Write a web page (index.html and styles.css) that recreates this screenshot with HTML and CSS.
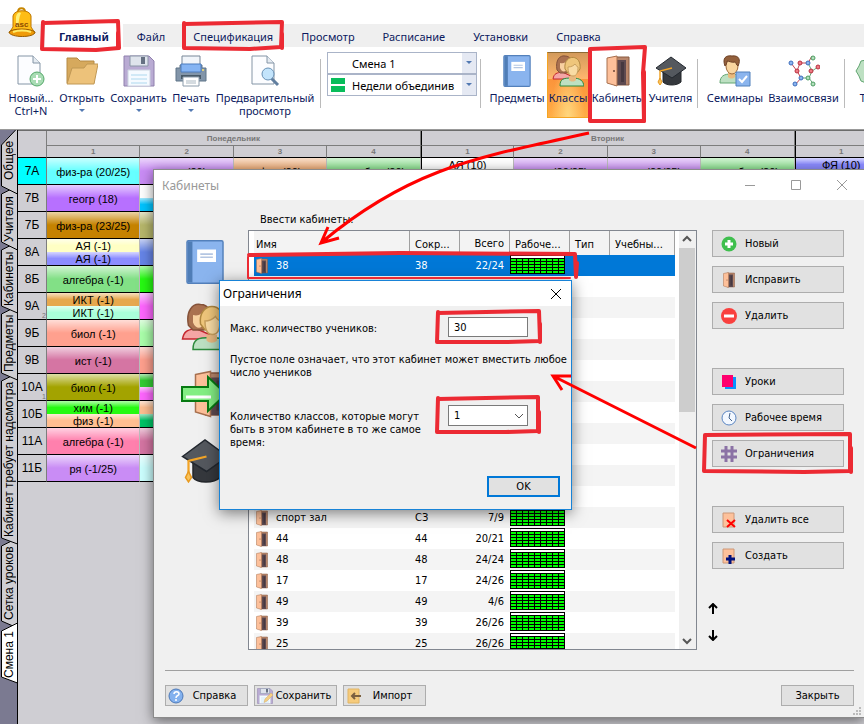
FILE: index.html
```html
<!DOCTYPE html>
<html lang="ru">
<head>
<meta charset="utf-8">
<title>Кабинеты</title>
<link rel="stylesheet" href="styles.css">
</head>
<body>
<svg class="defs" width="0" height="0" aria-hidden="true">
  <defs>
    <symbol id="hours" viewBox="0 0 55 19"><g shape-rendering="crispEdges"><path d="M0 0h55v19H0z" fill="#000"/><path d="M1 1h53v2H1z" fill="#fff"/><path d="M1 4h53v2H1zM1 7h53v2H1zM1 10h53v2H1zM1 13h53v2H1zM1 16h53v2H1z" fill="#0f0"/><path d="M6 3h1v15H6zM12 3h1v15h-1zM18 3h1v15h-1zM24 3h1v15h-1zM30 3h1v15h-1zM36 3h1v15h-1zM42 3h1v15h-1zM48 3h1v15h-1z" fill="#000"/></g></symbol>
    <symbol id="door" viewBox="0 0 24 32"><path d="M8 2h15v28H8z" fill="#b8866b" stroke="#8a5a40"/><path d="M11 5h9v25h-9z" fill="#5e4a50"/><path d="M15 7h3v20h-3z" fill="#463840"/><path d="M1 3 11 1v30L1 28z" fill="#fdc09a" stroke="#a8704f"/><circle cx="8" cy="16" r="1" fill="#6d4636"/></symbol>
    <symbol id="book" viewBox="0 0 24 28"><rect x=".5" y=".5" width="23" height="27" rx="1" fill="#8ab4ee" stroke="#5380bb"/><path d="M1 1h3v26H1z" fill="#4f7db6"/><path d="M7 6h12v8H7z" fill="#fff"/><path d="M9 9h8M9 11h8" stroke="#b4c6e2"/></symbol>
    <symbol id="people" viewBox="0 0 32 32"><path d="M1 24c1-6 4-6 9-7l9 4v3z" fill="#f5a5a5" stroke="#c4262e"/><path d="M5 15C3 5 8 0 13 1c6 0 7 5 7 14l-5 3H8z" fill="#aa7150" stroke="#85523a"/><path d="M8 8c4 1 6-1 7-3v9c-1 3-5 4-7-1z" fill="#f8d0a0"/><path d="M8 31c0-7 3-8 12-8s11 3 12 8z" fill="#bde0c2" stroke="#2d8a3c"/><path d="M17 21h7v4c-2 2-5 2-7 0z" fill="#e8b980"/><path d="M13 14c-2-15 17-16 15 0l-3 4h-9z" fill="#efc67b" stroke="#b08840"/><path d="M16 12c4 0 6-2 7-3 1 2 2 2 3 3 0 5-1 9-5 9s-5-4-5-9z" fill="#f9dba4" stroke="#c9a05e"/></symbol>
    <symbol id="cap" viewBox="0 0 32 30"><path d="M8 13v13c3 4 14 4 18 0V13z" fill="#35383d" stroke="#23262a"/><path d="M1 12 16 1l15 11-14 10z" fill="#54585e" stroke="#23282f"/><path d="m17 12-12 3v11" fill="none" stroke="#f2a427" stroke-width="1.500"/><path d="m5 22-2 4 2 3 2-3z" fill="#f9c35c" stroke="#e89a20"/></symbol>
    <symbol id="floppy" viewBox="0 0 32 32"><path d="M1 1h25l5 5v25H1z" fill="#b9abd3" stroke="#8f80ad"/><path d="M7 1h18v10H7z" fill="#dfe4ec" stroke="#8b96a8"/><path d="M18 2h4v7h-4z" fill="#667182"/><path d="M5 15h22v16H5z" fill="#f5faff" stroke="#ccd3e0"/><path d="M8 20h16M8 24h16M8 28h16" stroke="#add8ee"/></symbol>
    <symbol id="page" viewBox="0 0 28 32"><path d="M1 1h15l7 7v21H1z" fill="#fcfdff" stroke="#8495a6"/><path d="M16 1v7h7" fill="#e5ebf1" stroke="#8495a6"/></symbol>
  </defs>
</svg>
<div class="app">
  <header class="ribbon">
    <nav class="menu" aria-label="Меню">
      <svg class="bell" viewBox="0 0 28 31" aria-hidden="true"><path d="M10 5c0-5 7-5 7 0" fill="none" stroke="#c78600" stroke-width="2"/><path d="M5 20V9c1-7 17-7 18 0v11l4 6H1z" fill="#ffbd16" stroke="#bd7600"/><path d="M8 19V10c1-5 4-5 5-4-2 4-2 8-3 14z" fill="#fff07a"/><path d="M1 25c4-4 21-4 26 0 0 6-25 6-26 0z" fill="#ef9b09" stroke="#985c00"/><path d="M5 25c5-2 13-2 18 0" stroke="#ffec69" stroke-width="2" fill="none"/><text x="7" y="20" class="bell-text">asc</text></svg>
      <a href="#" class="active">Главный</a><a href="#">Файл</a><a href="#">Спецификация</a><a href="#">Просмотр</a><a href="#">Расписание</a><a href="#">Установки</a><a href="#">Справка</a>
    </nav>
    <div class="tools">
      <button class="tool w-new"><svg viewBox="0 0 28 32"><use href="#page"/><circle cx="20" cy="24" r="7" fill="#a9dcb4" stroke="#55a96a"/><path d="M20 20v8M16 24h8" stroke="#fff" stroke-width="2"/></svg>Новый...<br>Ctrl+N</button>
      <button class="tool w-open"><svg viewBox="0 0 32 32"><path d="M1 28V3h10l3 3h14v22z" fill="#d6a95d" stroke="#b58a45"/><path d="m1 29 5-16h12l3-4h11l-4 20z" fill="#edc27a" stroke="#c09855"/></svg>Открыть<i></i></button>
      <button class="tool w-save"><svg viewBox="0 0 32 32"><use href="#floppy"/></svg>Сохранить<i></i></button>
      <button class="tool w-print"><svg viewBox="0 0 32 32"><path d="M7 1h18v10H7z" fill="#f1f5fa" stroke="#788797"/><path d="M1 13h4v-3h22v3h4v13H1z" fill="#8295a9" stroke="#5f7488"/><path d="M6 9h20v8H6z" fill="#85b4f3" stroke="#4c7dbf"/><path d="M6 20h20v4H6z" fill="#485967"/><path d="M8 22h16v9H8z" fill="#fff" stroke="#8c9cab"/><path d="M11 26h10M11 28h10" stroke="#aab7c1"/><circle cx="28" cy="15" r="1" fill="#ffe56b"/></svg>Печать<i></i></button>
      <button class="tool w-preview"><svg viewBox="0 0 28 32"><use href="#page"/><path d="m20 23 7 7" stroke="#627f9f" stroke-width="3"/><circle cx="17" cy="19" r="6" fill="#c3e4fb" stroke="#6991b5"/></svg>Предварительный<br>просмотр</button>
      <hr>
      <div class="combos">
        <label class="combo"><select aria-label="Смена"><option>Смена 1</option></select></label>
        <label class="combo"><span class="weeks"></span><select aria-label="Недели"><option>Недели объединив</option></select></label>
      </div>
      <hr>
      <button class="tool w-subject"><svg viewBox="0 0 32 32"><use href="#book"/></svg>Предметы</button>
      <button class="tool w-class selected"><svg viewBox="0 0 32 32"><use href="#people"/></svg>Классы</button>
      <button class="tool w-room"><svg viewBox="0 0 24 32"><use href="#door"/></svg>Кабинеты</button>
      <button class="tool w-teacher"><svg viewBox="0 0 32 32"><use href="#cap"/></svg>Учителя</button>
      <hr>
      <button class="tool w-seminar"><svg viewBox="0 0 32 32"><path d="M1 28c0-7 4-9 11-9s12 3 12 9z" fill="#bde0c2" stroke="#63a672"/><path d="M9 17h7v5c-2 2-5 2-7 0z" fill="#e9ba7d"/><ellipse cx="13" cy="11" rx="6" ry="8" fill="#f9d6a0" stroke="#9d6a3b"/><path d="M6 11C3 3 7 0 13 1c7-1 9 4 6 10-2-1-2-4-3-4-3 1-6-1-8-1 0 2-1 4-2 5z" fill="#93603c" stroke="#6e4227"/><path d="M17 17h14v14H17z" fill="#8bb5ee" stroke="#5080bb"/><path d="m20 24 3 3 5-6" stroke="#fff" stroke-width="2" fill="none"/></svg>Семинары</button>
      <button class="tool w-links"><svg viewBox="0 0 32 32"><path d="m3 8 6 8 4 7-6 7M9 16l3-8h8l4-7" stroke="#c24754" fill="none"/><path d="m13 23 8 0 5 7M21 23l3-7-4-8M24 16l6-4" stroke="#66a978" fill="none"/><g fill="#8ab4f0" stroke="#3e6dbb"><circle cx="3" cy="8" r="2"/><circle cx="20" cy="8" r="2"/><circle cx="13" cy="23" r="2"/><circle cx="7" cy="29" r="2"/></g><g fill="#ef7984" stroke="#b7303f"><circle cx="12" cy="8" r="2"/><circle cx="9" cy="16" r="2"/><circle cx="23" cy="16" r="2"/><circle cx="30" cy="12" r="2"/></g><g fill="#b3dfbd" stroke="#4c9c61"><circle cx="25" cy="3" r="2"/><circle cx="20" cy="23" r="2"/><circle cx="25" cy="29" r="2"/></g></svg>Взаимосвязи</button>
      <hr>
      <button class="tool w-test"><svg viewBox="0 0 32 32"><path d="m16 2 4 2 5 1 2 5 3 5-2 5-2 5-5 2-5 3-5-2-5-2-2-5-3-5 3-5 2-5 5-1z" fill="#bde0c2" stroke="#63a672"/></svg>Тест</button>
    </div>
  </header>

  <main class="workspace">
    <nav class="views" aria-label="Виды">
      <svg viewBox="0 0 18 594" aria-hidden="true"><g fill="#cfced3" stroke="#000"><path d="M17.500 494V412L1.500 420v67z"/><path d="M17.500 498V408L1.500 416v75z"/><path d="M17.500 414V243L1.500 251v157z"/><path d="M17.500 250V176L1.500 184v59z"/><path d="M17.500 183V112L1.500 120v56z"/><path d="M17.500 120V56L1.500 64v48z"/><path d="M17.500 64V-2L1.500 15v41z"/><path d="M17.500 553V493L1.500 501v46z" fill="#fff"/><path d="M17.500 0V594"/></g></svg>
      <button class="v1">Общее</button><button class="v2">Учителя</button><button class="v3">Кабинеты</button><button class="v4">Предметы</button><button class="v5">Кабинет требует надсмотра</button><button class="v6">Сетка уроков</button><button class="v7">Смена 1</button>
    </nav>
    <div class="grid-area">
      <table class="timetable">
        <colgroup><col class="klass"><col span="9"></colgroup>
        <thead>
          <tr class="days"><th rowspan="2"></th><th colspan="4">Понедельник</th><th colspan="4" class="day">Вторник</th><th class="day"></th></tr>
          <tr class="nums"><th>1</th><th>2</th><th>3</th><th>4</th><th class="day">1</th><th>2</th><th>3</th><th>4</th><th class="day">1</th></tr>
        </thead>
        <tbody>
          <tr><th class="cyan">7А</th><td><p class="c-aqua">физ-ра (20/25)</p></td><td><p class="c-violet">ист (20)</p></td><td><p class="c-salmon">физ (20)</p></td><td><p class="c-green">алгебра (20)</p></td><td class="day two"><p class="c-white">АЯ (10)</p><p class="c-white"></p></td><td><p class="c-violet">ист (20/25)</p></td><td><p class="c-violet">ист (20/25)</p></td><td><p class="c-green">алгебра (20)</p></td><td class="day two"><p class="c-blue">ФЯ (10)</p><p class="c-blue"></p></td></tr>
          <tr><th>7В</th><td><p class="c-purple">геогр (18)</p></td><td class="two"><p class="c-white"></p><p class="c-sky"></p></td></tr>
          <tr><th>7Б</th><td><p class="c-ochre">физ-ра (23/25)</p></td><td><p class="c-khaki"></p></td></tr>
          <tr><th>8А</th><td class="two"><p class="c-cream">АЯ (-1)</p><p class="c-blue">АЯ (-1)</p></td><td><p class="c-royal"></p></td></tr>
          <tr><th>8Б</th><td><p class="c-green">алгебра (-1)</p></td><td><p class="c-lime"></p></td></tr>
          <tr><th>9А<sub>2</sub></th><td class="two"><p class="c-orange">ИКТ (-1)</p><p class="c-mint">ИКТ (-1)</p></td><td><p class="c-pink"></p></td></tr>
          <tr><th>9Б</th><td><p class="c-coral">биол (-1)</p></td><td><p class="c-pale"></p></td></tr>
          <tr><th>9В</th><td><p class="c-mauve">ист (-1)</p></td><td><p class="c-coral"></p></td></tr>
          <tr><th>10А<sub>1</sub></th><td><p class="c-olive">биол (-1)</p></td><td class="two"><p class="c-leaf"></p><p class="c-pink"></p></td></tr>
          <tr><th>10Б</th><td class="two"><p class="c-lime">хим (-1)</p><p class="c-peach">физ (-1)</p></td><td class="two"><p class="c-peach"></p><p class="c-jade"></p></td></tr>
          <tr><th>11А</th><td><p class="c-rose">алгебра (-1)</p></td><td><p class="c-mauve"></p></td></tr>
          <tr><th>11Б</th><td><p class="c-violet">ря (-1/25)</p></td><td><p class="c-ice"></p></td></tr>
        </tbody>
      </table>
    </div>
  </main>

  <section class="window rooms" role="dialog" aria-label="Кабинеты">
    <header class="caption"><h1>Кабинеты</h1>
      <button aria-label="Свернуть"><svg viewBox="0 0 12 12"><path d="M1 6.500h10"/></svg></button>
      <button aria-label="Развернуть"><svg viewBox="0 0 12 12"><path d="M1.500 1.500h9v9h-9z"/></svg></button>
      <button aria-label="Закрыть окно"><svg viewBox="0 0 12 12"><path d="m1 1 10 10M11 1 1 11"/></svg></button>
    </header>
    <div class="content">
      <div class="pictures" aria-hidden="true">
        <svg viewBox="0 0 24 28"><use href="#book"/></svg>
        <svg viewBox="0 0 32 32"><use href="#people"/></svg>
        <svg viewBox="0 0 48 48"><svg x="7" width="36" height="48" viewBox="0 0 24 32"><use href="#door"/></svg><path d="M1 17h26V7l18 17-18 17V31H1z" fill="#83ee83" stroke="#077a12" stroke-width="2"/><path d="M5 27h25" stroke="#fff" stroke-width="3"/></svg>
        <svg viewBox="0 0 32 30"><use href="#cap"/></svg>
      </div>
      <div class="center">
        <h2>Ввести кабинеты:</h2>
        <div class="list">
          <div class="list-view">
            <table>
              <colgroup><col class="n1"><col class="n2"><col class="n2"><col class="n4"><col class="n5"><col></colgroup>
              <thead><tr><th>Имя</th><th>Сокр...</th><th class="num">Всего</th><th>Рабоче...</th><th>Тип</th><th>Учебны...</th></tr></thead>
              <tbody>
                <tr class="current"><td><svg class="ico" viewBox="0 0 24 32"><use href="#door"/></svg>38</td><td>38</td><td class="num">22/24</td><td class="hrs"><svg viewBox="0 0 55 19"><use href="#hours"/></svg></td><td></td><td></td></tr>
                <tr><td colspan="6"></td></tr><tr><td colspan="6"></td></tr><tr><td colspan="6"></td></tr><tr><td colspan="6"></td></tr><tr><td colspan="6"></td></tr><tr><td colspan="6"></td></tr><tr><td colspan="6"></td></tr><tr><td colspan="6"></td></tr><tr><td colspan="6"></td></tr><tr><td colspan="6"></td></tr><tr><td colspan="6"></td></tr>
                <tr><td><svg class="ico" viewBox="0 0 24 32"><use href="#door"/></svg>спорт зал</td><td>СЗ</td><td class="num">7/9</td><td class="hrs"><svg viewBox="0 0 55 19"><use href="#hours"/></svg></td><td></td><td></td></tr>
                <tr><td><svg class="ico" viewBox="0 0 24 32"><use href="#door"/></svg>44</td><td>44</td><td class="num">20/21</td><td class="hrs"><svg viewBox="0 0 55 19"><use href="#hours"/></svg></td><td></td><td></td></tr>
                <tr><td><svg class="ico" viewBox="0 0 24 32"><use href="#door"/></svg>48</td><td>48</td><td class="num">24/24</td><td class="hrs"><svg viewBox="0 0 55 19"><use href="#hours"/></svg></td><td></td><td></td></tr>
                <tr><td><svg class="ico" viewBox="0 0 24 32"><use href="#door"/></svg>17</td><td>17</td><td class="num">24/26</td><td class="hrs"><svg viewBox="0 0 55 19"><use href="#hours"/></svg></td><td></td><td></td></tr>
                <tr><td><svg class="ico" viewBox="0 0 24 32"><use href="#door"/></svg>49</td><td>49</td><td class="num">4/6</td><td class="hrs"><svg viewBox="0 0 55 19"><use href="#hours"/></svg></td><td></td><td></td></tr>
                <tr><td><svg class="ico" viewBox="0 0 24 32"><use href="#door"/></svg>39</td><td>39</td><td class="num">26/26</td><td class="hrs"><svg viewBox="0 0 55 19"><use href="#hours"/></svg></td><td></td><td></td></tr>
                <tr><td><svg class="ico" viewBox="0 0 24 32"><use href="#door"/></svg>25</td><td>25</td><td class="num">26/26</td><td class="hrs"><svg viewBox="0 0 55 19"><use href="#hours"/></svg></td><td></td><td></td></tr>
              </tbody>
            </table>
          </div>
          <div class="scroll"><svg viewBox="0 0 16 17"><path d="m4 10 4-4 4 4"/></svg><span></span><svg viewBox="0 0 16 17"><path d="m4 7 4 4 4-4"/></svg></div>
        </div>
      </div>
      <div class="actions">
        <div class="group">
          <button><svg viewBox="0 0 16 16"><circle cx="8" cy="8" r="7.500" fill="#3fbf4e"/><path d="M8 4v8M4 8h8" stroke="#fff" stroke-width="3"/></svg>Новый</button>
          <button><svg viewBox="0 0 24 32"><use href="#door"/></svg>Исправить</button>
          <button><svg viewBox="0 0 16 16"><circle cx="8" cy="8" r="8" fill="#f9403e"/><path d="M3 8h10" stroke="#fff" stroke-width="3"/></svg>Удалить</button>
        </div>
        <div class="group">
          <button><svg viewBox="0 0 16 16"><path d="M4 3h11v12H4z" fill="#0b92ff"/><path d="M1 1h11v12H1z" fill="#ff006e"/></svg>Уроки</button>
          <button><svg viewBox="0 0 16 16"><circle cx="8" cy="8" r="7" fill="#f3f8ff" stroke="#5b86c3"/><path d="M9 3 8 8l3 3" stroke="#44638c" fill="none"/></svg>Рабочее время</button>
          <button><svg viewBox="0 0 16 16"><path d="M5 0v16M11 0v16M0 5h16M0 11h16" stroke="#8b72a5" stroke-width="3"/></svg>Ограничения</button>
        </div>
        <div class="group">
          <button><svg viewBox="0 0 16 16"><path d="M2 1h11v14H2z" fill="#fdc19b" stroke="#cc9878"/><path d="m6 8 8 7M14 8l-8 7" stroke="#f00" stroke-width="2"/></svg>Удалить все</button>
          <button><svg viewBox="0 0 16 16"><path d="M2 1h11v14H2z" fill="#fdc19b" stroke="#cc9878"/><path d="M9 7v9M5 11h9" stroke="#00117c" stroke-width="3"/></svg>Создать</button>
        </div>
        <div class="order"><button aria-label="Вверх"><svg viewBox="0 0 10 12"><path d="M5 11V2M1 5l4-4 4 4"/></svg></button><button aria-label="Вниз"><svg viewBox="0 0 10 12"><path d="M5 1v9M1 7l4 4 4-4"/></svg></button></div>
      </div>
    </div>
    <footer class="bottom">
      <button class="mid"><svg viewBox="0 0 16 16"><circle cx="8" cy="8" r="7" fill="#83b1ee" stroke="#4d79b8"/><path d="M6 6c0-3 5-3 5 0 0 2-3 1-3 4M8 11v2" stroke="#fff" fill="none" stroke-width="1.500"/></svg><span>Справка</span></button>
      <button class="mid"><svg viewBox="0 0 32 32"><use href="#floppy"/><path d="m14 29 2-7 12-12 4 4-12 12z" fill="#f6cf83" stroke="#d3aa68"/></svg><span>Сохранить</span></button>
      <button class="mid"><svg viewBox="0 0 16 16"><path d="M2 1h11v14H2z" fill="#f6cb7c" stroke="#e1b565"/><path d="M15 8H6M9 5 6 8l3 3" stroke="#7b6040" stroke-width="2" fill="none"/></svg><span>Импорт</span></button>
      <button class="close">Закрыть</button>
      <svg class="grip" viewBox="0 0 9 9" aria-hidden="true"><path d="M0 7h2v2H0zM3 7h2v2H3zM6 7h2v2H6zM3 4h2v2H3zM6 4h2v2H6zM6 1h2v2H6z" fill="#bbb"/></svg>
    </footer>
  </section>

  <section class="window limits" role="dialog" aria-label="Ограничения">
    <header class="caption"><h1>Ограничения</h1><button aria-label="Закрыть окно"><svg viewBox="0 0 12 12"><path d="m1 1 10 10M11 1 1 11"/></svg></button></header>
    <form>
      <div class="field"><label for="max">Макс. количество учеников:</label><input id="max" type="text" value="30"></div>
      <p>Пустое поле означает, что этот кабинет может вместить любое число учеников</p>
      <div class="field"><label for="count">Количество классов, которые могут быть в этом кабинете в то же самое время:</label><span class="pick"><select id="count"><option>1</option></select><svg viewBox="0 0 10 6" aria-hidden="true"><path d="m1 1 4 4 4-4"/></svg></span></div>
      <button class="ok" type="button">OK</button>
    </form>
  </section>

  <svg class="marks" viewBox="0 0 864 724" aria-hidden="true">
    <g class="boxes">
      <path d="M43 23 118 21 119 48 96 50 42 49 43 22"/><path d="M118 33v15"/>
      <path d="M184 24 282 22 281 47 250 49 184 48 184 23"/><path d="M282 34v14"/>
      <path d="M590 49 645 47 643 73 644 121 590 121 590 49"/><path d="M644 72v49"/>
      <path d="M249 255 400 253 575 254 576 277 577 263"/><path d="M248 257v21h322" class="thin"/>
      <path d="M438 313 539 311 540 341 508 342 437 342 438 312"/><path d="M540 324v18"/>
      <path d="M438 399 538 397 538 431 506 432 437 432 438 398"/><path d="M539 412v20"/>
      <path d="M705 435 850 434 850 471 804 472 704 471 705 435"/><path d="M851 448v24"/>
    </g>
    <g class="arrows"><path d="M589 133C480 157 412 167 322 242M328 227 321 243 339 238"/><path d="M696 448 553 376M571 376H553L562 390"/></g>
  </svg>
</div>
</body>
</html>
```
FILE: styles.css
```css
* { box-sizing: border-box; }
body { margin: 0; font-family: "DejaVu Sans Condensed", "DejaVu Sans", sans-serif; font-size: 11px; color: #000; }
button, input, select { font: inherit; color: inherit; margin: 0; }
h1, h2, p { margin: 0; font-weight: normal; }
.defs { position: absolute; }
.app { position: relative; display: flex; flex-direction: column; min-height: 100vh; overflow: hidden; background: #cfced3; }

/* Ribbon */
.ribbon { padding-top: 24px; background: #fff; border-bottom: 1px solid #999; font-family: "Noto Sans", sans-serif; font-size: 11px; color: #0c1a5e; }
.menu { position: relative; display: flex; height: 23px; padding-left: 45px; background: #efefef; }
.menu a { padding: 0 14px; line-height: 26px; color: inherit; text-decoration: none; }
.menu .active { background: #fff; font-weight: bold; }
.bell { position: absolute; left: 8px; top: -17px; width: 28px; height: 31px; }
.bell-text { font: bold 8px "Liberation Sans", sans-serif; fill: #8b4a00; }
.tools { display: flex; height: 82px; padding: 5px 0 0 6px; overflow: hidden; }
.tools hr { flex: none; width: 1px; height: 49px; margin: 7px 6px 0 3px; border: 0; background: #bbb; }
.tool { display: flex; flex: none; flex-direction: column; align-items: center; height: 66px; padding: 2px 0 0; border: 1px solid transparent; background: none; line-height: 13px; white-space: nowrap; text-align: center; }
.tool svg { display: block; flex: none; width: 32px; height: 32px; margin-bottom: 4px; }
.tool i { display: block; width: 6px; margin-top: 5px; border: 3px solid transparent; border-top-color: #5279b2; border-bottom: 0; }
.w-new { width: 50px; } .w-open { width: 52px; } .w-save { width: 61px; } .w-print { width: 44px; } .w-preview { width: 104px; }
.w-subject { width: 60px; } .w-class { width: 42px; } .w-room { width: 58px; } .w-teacher { width: 47px; }
.w-seminar { width: 62px; } .w-links { width: 75px; } .w-test { width: 40px; }
.tool.selected { border-color: #f5a522; border-top-color: #8e6a35; background: radial-gradient(ellipse at bottom, #ffd77e, transparent 60%), linear-gradient(#d39a5b, #ffb66d 40%, #fb943b 41%, #ffad45); }
.combos { flex: none; width: 150px; }
.combo { position: relative; display: flex; align-items: center; height: 22px; border: 1px solid #aab4c8; color: #000; }
.combo::before { content: ""; position: absolute; right: 0; top: 0; width: 14px; height: 20px; background: #e5e9f3; }
.combo::after { content: ""; position: absolute; right: 4px; top: 8px; border: 3px solid transparent; border-top-color: #5279b2; border-bottom: 0; }
.combo select { position: relative; flex: 1; width: 100%; padding: 0 0 0 24px; border: 0; background: none; appearance: none; }
.weeks { position: absolute; left: 3px; top: 3px; width: 14px; height: 14px; background: linear-gradient(#08bd5b 6px, #fff 6px, #fff 8px, #08bd5b 8px); }

/* Side tabs and timetable */
.workspace { display: flex; flex: 1; font-family: "Liberation Sans", Arial, sans-serif; }
.views { position: relative; flex: none; display: flex; flex-direction: column; width: 18px; background: #7b7a91; }
.views > svg { position: absolute; width: 18px; height: 594px; }
.views button { position: relative; width: 18px; padding: 0; border: 0; background: none; writing-mode: vertical-rl; transform: rotate(180deg); font-size: 12px; line-height: 18px; text-align: center; white-space: nowrap; }
.v1 { height: 61px; } .v2 { height: 56px; } .v3 { height: 63px; } .v4 { height: 67px; } .v5 { height: 164px; } .v6 { height: 84px; } .v7 { height: 60px; }
.grid-area { flex: 1; min-width: 0; overflow: hidden; border-top: 1px solid #6c6c6c; }
.timetable { width: 870px; border-collapse: separate; border-spacing: 0; table-layout: fixed; font-size: 12px; }
.timetable .klass { width: 29px; }
.timetable th, .timetable td { padding: 0; font-weight: normal; border-right: 1px solid #7d7d7d; }
.timetable .days th, .timetable .nums th { font-size: 8px; font-weight: bold; color: #777; }
.days th { height: 15px; border-bottom: 1px solid #7d7d7d; }
.nums th { height: 12px; border-bottom: 1px solid #000; }
.days th[rowspan] { border-bottom-color: #000; }
.timetable .day { border-left: 1px solid #000; }
.timetable tbody th { position: relative; height: 27px; border-bottom: 1px solid #000; }
.timetable tbody td { height: 27px; border-bottom: 1px solid #000; border-right-color: #bbb; font-size: 11px; }
.timetable tbody .cyan { background: #0ff; }
.timetable sub { position: absolute; right: 0; bottom: 0; font-size: 7px; line-height: 7px; color: #777; }
.timetable p { height: 26px; line-height: 28px; text-align: center; white-space: nowrap; overflow: hidden; background-image: linear-gradient(rgba(255,255,255,.65), rgba(255,255,255,0) 50%); }
.timetable .two p { height: 13px; line-height: 14px; }
.c-aqua { background-color: #66ffff; } .c-violet { background-color: #c98cf5; } .c-salmon { background-color: #eea66c; } .c-green { background-color: #82e086; }
.c-white { background-color: #fff; } .c-blue { background-color: #8c8cff; } .c-purple { background-color: #b770ff; } .c-sky { background-color: #00c4ff; }
.c-ochre { background-color: #c58200; } .c-khaki { background-color: #b7b76b; } .c-cream { background-color: #ffffc4; } .c-royal { background-color: #6685e8; }
.c-lime { background-color: #26fa12; } .c-orange { background-color: #e6a84e; } .c-mint { background-color: #aaffda; } .c-pink { background-color: #ff66ff; }
.c-coral { background-color: #ffa08e; } .c-pale { background-color: #aaffaa; } .c-mauve { background-color: #d575a3; } .c-olive { background-color: #a3a300; }
.c-leaf { background-color: #33cc33; } .c-peach { background-color: #ffbf91; } .c-jade { background-color: #00c466; } .c-rose { background-color: #ff80ad; } .c-ice { background-color: #ccffff; }

/* Windows */
.window { position: absolute; display: flex; flex-direction: column; background: #f0f0f0; }
.caption { display: flex; align-items: center; background: #fff; font-family: "Noto Sans", sans-serif; font-size: 12px; }
.caption h1 { flex: 1; font-size: 12px; }
.caption button { padding: 0; border: 0; background: none; }
.caption svg { display: block; width: 12px; height: 12px; fill: none; stroke: currentColor; }
.rooms { left: 153px; right: 0; top: 169px; bottom: 6px; border: 1px solid #8b8b8b; border-right: 0; box-shadow: 0 3px 12px rgba(0,0,0,.5); }
.rooms .caption { height: 30px; padding: 0 16px 0 8px; gap: 34px; color: #999; }
.content { flex: 1; display: flex; min-height: 0; padding-right: 20px; }
.pictures { flex: none; width: 94px; padding: 40px 0 0 27px; display: flex; flex-direction: column; gap: 19px; }
.pictures svg { width: 48px; height: 48px; }
.pictures > svg:first-child { height: 44px; }
.center { flex: 1; min-width: 0; display: flex; flex-direction: column; }
.center h2 { flex: none; height: 30px; padding-left: 12px; font-size: 11px; line-height: 40px; }
.list { flex: 1; min-height: 0; display: flex; border: 1px solid #828790; background: #fff; }
.list-view { flex: 1; min-height: 0; overflow: hidden; padding: 0 4px 0 5px; }
.list table { width: 100%; border-collapse: collapse; table-layout: fixed; }
.n1 { width: 156px; } .n2 { width: 50px; } .n4 { width: 60px; } .n5 { width: 40px; }
.list th { height: 24px; padding: 2px 0 0 5px; background: #f3f3f3; box-shadow: inset -1px 0 #a0a0a0; text-align: left; font-weight: normal; white-space: nowrap; }
.list th:first-child { padding-left: 2px; }
.list td { height: 21px; padding: 0 0 0 5px; white-space: nowrap; }
.list td:first-child { padding-left: 2px; }
.list .num { padding: 0 6px 0 0; text-align: right; }
.list td.hrs { padding: 0; vertical-align: top; }
.hrs svg { display: block; width: 55px; height: 19px; }
.list tbody tr:nth-child(odd) { background: #f4f4f4; }
.list tbody tr.current { background: #0078d7; color: #fff; }
.ico { width: 12px; height: 16px; margin-right: 8px; vertical-align: middle; }
.scroll { flex: none; width: 17px; display: flex; flex-direction: column; background: #f0f0f0; }
.scroll svg { width: 16px; height: 17px; fill: none; stroke: #555; stroke-width: 2; }
.scroll span { height: 164px; margin-right: 1px; margin-bottom: auto; background: #cdcdcd; }
.actions { flex: none; width: 147px; padding: 30px 0 0 15px; }
.group { display: flex; flex-direction: column; gap: 9px; margin-bottom: 39px; }
.group button, .bottom button, .ok { border: 1px solid #adadad; background: #e1e1e1; }
.group button { display: flex; align-items: center; height: 27px; padding: 0 8px; text-align: left; }
.group svg { width: 16px; height: 16px; margin-right: 8px; }
.order { display: flex; flex-direction: column; align-items: flex-start; gap: 14px; padding-left: 1px; margin-top: -5px; }
.order button { display: block; padding: 0; border: 0; background: none; }
.order svg { display: block; width: 10px; height: 12px; margin-left: -5px; fill: none; stroke: #000; stroke-width: 2; }
.bottom { position: relative; display: flex; gap: 6px; margin: 20px 10px 0 11px; padding: 14px 0 11px; border-top: 1px solid #a0a0a0; }
.bottom button { height: 21px; padding: 0 2px; }
.bottom .mid { display: flex; align-items: center; width: 83px; }
.mid svg { flex: none; width: 16px; height: 16px; }
.mid span { flex: 1; text-align: center; white-space: nowrap; }
.bottom .close { width: 73px; margin-left: auto; }
.grip { position: absolute; right: -8px; bottom: 2px; width: 9px; height: 9px; }

.limits { left: 219px; top: 280px; width: 353px; height: 230px; border: 1px solid #1883d7; box-shadow: 0 3px 14px rgba(0,0,0,.5); }
.limits .caption { height: 25px; padding: 0 9px 0 3px; }
.limits form { flex: 1; display: flex; flex-direction: column; padding: 11px 3px 12px 10px; line-height: 13px; }
.field { display: flex; justify-content: space-between; padding-right: 40px; }
.field label { width: 200px; padding-top: 5px; }
.field input { width: 80px; height: 20px; padding: 0 5px; border: 1px solid #7a7a7a; background: #fff; }
.limits p { margin: 16px 0 26px; }
.pick { position: relative; width: 80px; height: 21px; }
.pick select { width: 100%; height: 100%; padding: 0 5px; border: 1px solid #7a7a7a; border-radius: 0; background: #fff; appearance: none; }
.pick svg { position: absolute; right: 4px; top: 8px; width: 10px; height: 6px; fill: none; stroke: #555; pointer-events: none; }
.ok { align-self: flex-end; width: 73px; height: 21px; margin: auto 8px 0 0; padding: 0; border: 2px solid #0078d7; }

/* Hand-drawn marks above the windows */
.marks { position: absolute; left: 0; top: 0; width: 864px; height: 724px; pointer-events: none; fill: none; }
.boxes { stroke: #ec2a33; stroke-width: 4; stroke-linejoin: round; stroke-linecap: round; }
.boxes .thin { stroke-width: 2; }
.arrows { stroke: #f00; stroke-width: 3; }
```
